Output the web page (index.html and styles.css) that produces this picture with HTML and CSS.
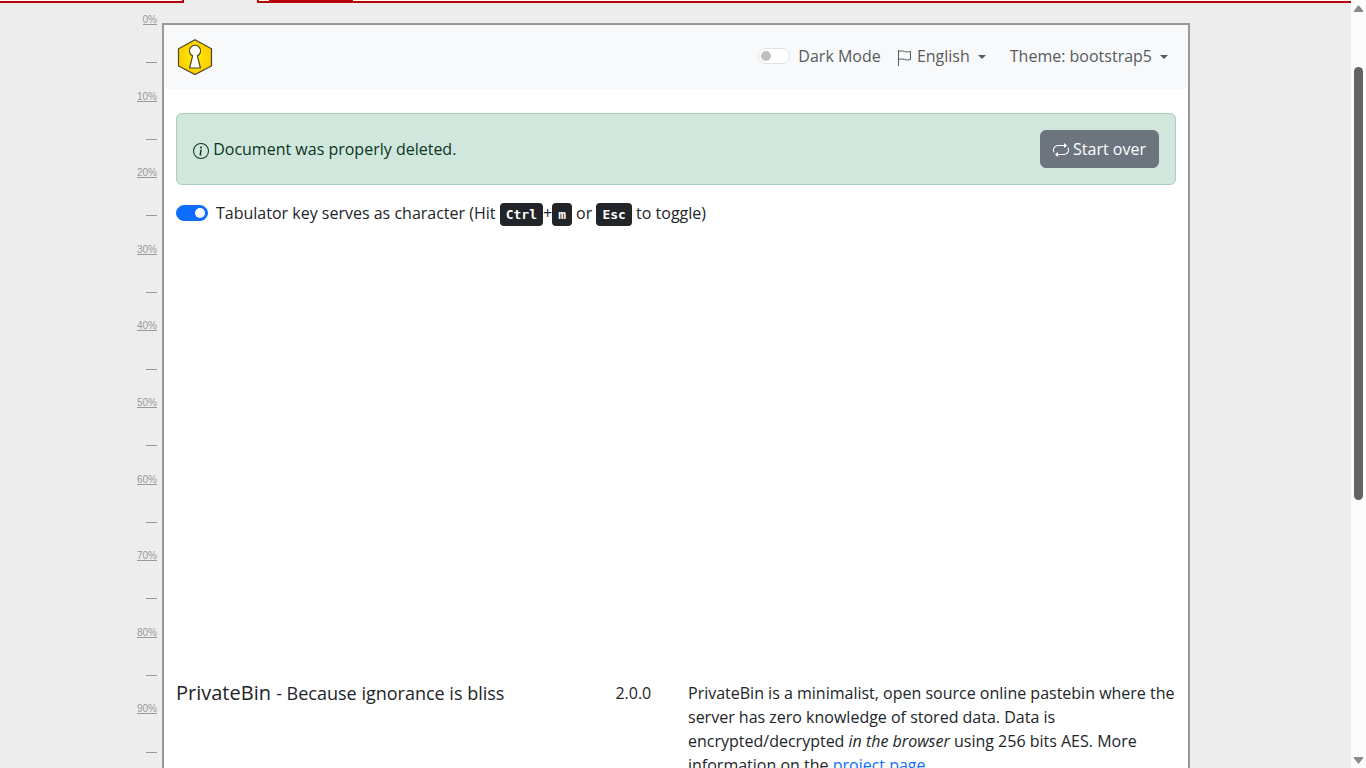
FILE: index.html
```html
<!DOCTYPE html>
<html lang="en">
<head>
    <meta charset="UTF-8">
    <meta name="viewport" content="width=device-width, initial-scale=1.0">
    <title>PrivateBin</title>
    <link rel="stylesheet" href="styles.css">
</head>
<body>

<div class="page">
    <div class="tabs">
        <div class="tab-left"></div>
        <div class="tab-right"><div class="tab-mark"></div></div>
    </div>

    <div class="report">
        <div class="scale">
            <span>0%</span><i></i>
            <span>10%</span><i></i>
            <span>20%</span><i></i>
            <span>30%</span><i></i>
            <span>40%</span><i></i>
            <span>50%</span><i></i>
            <span>60%</span><i></i>
            <span>70%</span><i></i>
            <span>80%</span><i></i>
            <span>90%</span><i></i>
        </div>

        <div class="frame">
            <nav class="navbar">
                <a class="brand" href="#" aria-label="PrivateBin">
                    <svg width="38" height="38" viewBox="0 0 38 38">
                        <defs>
                            <radialGradient id="gold">
                                <stop offset="0" stop-color="#fff000"/>
                                <stop offset="1" stop-color="#ffcc00"/>
                            </radialGradient>
                        </defs>
                        <path d="M19 1.8 35.5 10.8V28L19 36.6 2.5 28V10.8Z" fill="url(#gold)" stroke="#4a4726" stroke-width="1.2"/>
                        <path d="M16.6 17.9a5.6 5.6 0 1 1 4.8 0L24.4 30H13.6Z" fill="#fff" stroke="#4a4726" stroke-width="1.2"/>
                    </svg>
                </a>
                <div class="nav-items">
                    <div class="switch-row">
                        <input class="switch" type="checkbox" id="darkmode">
                        <label for="darkmode">Dark Mode</label>
                    </div>
                    <button class="nav-link" type="button">
                        <svg class="icon" width="16" height="16" viewBox="0 0 16 16" fill="none" stroke="currentColor">
                            <path d="M1.5 0v16M1.5 1.5c2 -1 4 -.6 6 0s4 .6 6 0v8c-2 .6-4 .6-6 0s-4-.8-6 0"/>
                        </svg>
                        English<span class="caret"></span>
                    </button>
                    <button class="nav-link" type="button">Theme: bootstrap5<span class="caret"></span></button>
                </div>
            </nav>

            <main>
                <div class="alert" role="alert">
                    <div>
                        <svg class="icon" width="16" height="16" viewBox="0 0 16 16" fill="currentColor">
                            <path d="M8 15A7 7 0 1 1 8 1a7 7 0 0 1 0 14m0 1A8 8 0 1 0 8 0a8 8 0 0 0 0 16"/>
                            <path d="m8.93 6.588-2.29.287-.082.38.45.083c.294.07.352.176.288.469l-.738 3.468c-.194.897.105 1.319.808 1.319.545 0 1.178-.252 1.465-.598l.088-.416c-.2.176-.492.246-.686.246-.275 0-.375-.193-.304-.533zM9 4.5a1 1 0 1 1-2 0 1 1 0 0 1 2 0"/>
                        </svg>
                        Document was properly deleted.
                    </div>
                    <button class="btn" type="button">
                        <svg class="icon" width="16" height="16" viewBox="0 0 16 16" fill="currentColor">
                            <path d="M11 5.466V4H5a4 4 0 0 0-3.584 5.777.5.5 0 1 1-.896.446A5 5 0 0 1 5 3h6V1.534a.25.25 0 0 1 .41-.192l2.36 1.966c.12.1.12.284 0 .384l-2.36 1.966a.25.25 0 0 1-.41-.192Zm3.81.086a.5.5 0 0 1 .67.225A5 5 0 0 1 11 13H5v1.466a.25.25 0 0 1-.41.192l-2.36-1.966a.25.25 0 0 1 0-.384l2.36-1.966a.25.25 0 0 1 .41.192V12h6a4 4 0 0 0 3.585-5.777.5.5 0 0 1 .225-.67Z"/>
                        </svg>
                        Start over
                    </button>
                </div>
                <div class="switch-row">
                    <input class="switch" type="checkbox" id="tabsupport" checked>
                    <label for="tabsupport">Tabulator key serves as character (Hit <kbd>Ctrl</kbd>+<kbd>m</kbd> or <kbd>Esc</kbd> to toggle)</label>
                </div>
            </main>

            <footer>
                <h4>PrivateBin <small>- Because ignorance is bliss</small></h4>
                <p class="version">2.0.0</p>
                <p>PrivateBin is a minimalist, open source online pastebin where the server has zero knowledge of stored data. Data is encrypted/decrypted <em>in the browser</em> using 256 bits AES. More information on the <a href="#">project page</a>.</p>
            </footer>
        </div>
    </div>
</div>

<div class="scrollbar">
    <svg width="9" height="7" viewBox="0 0 9 7"><path d="M4.5 0 9 5.5V7H0V5.500Z" fill="#8b8b8b"/></svg>
    <div class="track"><div class="thumb"></div></div>
    <svg width="9" height="7" viewBox="0 0 9 7"><path d="M4.500 7 9 1.500V0H0V1.500Z" fill="#8b8b8b"/></svg>
</div>

</body>
</html>
```

FILE: styles.css
```css
* {
    box-sizing: border-box;
}
body {
    margin: 0;
    height: 100vh;
    display: flex;
    overflow: hidden;
    background: #ededed;
    color: #212529;
    font-family: "Segoe UI", "Open Sans", "Noto Sans", sans-serif;
    font-size: 16px;
    line-height: 24px;
}
button {
    font: inherit;
    cursor: pointer;
}
a {
    color: #0d6efd;
}
.page {
    flex: 1;
    min-width: 0;
}
.tabs {
    display: flex;
    gap: 73px;
    height: 3px;
}
.tab-left, .tab-right {
    background: #fffff0;
    border-bottom: 2px solid #b8000f;
}
.tab-left {
    width: 184px;
    border-right: 2px solid #b8000f;
}
.tab-right {
    flex: 1;
    padding-left: 10px;
    border-left: 2px solid #b8000f;
}
.tab-mark {
    width: 84px;
    height: 1px;
    background: #b8000f;
}
.report {
    display: grid;
    grid-template-columns: 162px 1fr 161px;
    align-items: start;
}
.scale {
    display: grid;
    grid-template-rows: repeat(20, 1fr);
    justify-items: end;
    align-items: start;
    height: 766px;
    margin-top: 11px;
    padding-right: 5px;
    color: #999;
    font: 10px/12px "Liberation Sans", Arial, sans-serif;
}
.scale span, .scale i {
    height: 11px;
    border-bottom: 1px solid #999;
}
.scale i {
    width: 11px;
}
.frame {
    margin-top: 20px;
    border: 2px solid #999;
    background: #fff;
}
.navbar {
    display: flex;
    justify-content: space-between;
    align-items: center;
    height: 64px;
    padding: 0 12px;
    background: #f8f9fa;
}
.brand svg {
    display: block;
}
.nav-items {
    display: flex;
    align-items: center;
    gap: 8px;
    padding-bottom: 2px;
    color: #595a5b;
}
.nav-link {
    padding: 8px;
    border: 0;
    background: none;
    color: inherit;
}
.icon {
    vertical-align: -4px;
}
.btn .icon {
    vertical-align: -3px;
}
.caret {
    display: inline-block;
    margin-left: 8px;
    vertical-align: 3px;
    border: 4px solid transparent;
    border-top-color: currentColor;
    border-bottom: 0;
}
.switch-row {
    display: flex;
    align-items: center;
    gap: 8px;
}
.switch {
    appearance: none;
    flex: none;
    display: flex;
    align-items: center;
    width: 32px;
    height: 16px;
    margin: 0;
    padding: 0 2px;
    border: 1px solid #dee2e6;
    border-radius: 8px;
    background: #fff;
}
.switch::before {
    content: "";
    width: 10px;
    height: 10px;
    border-radius: 50%;
    background: #bfbfbf;
}
.switch:checked {
    justify-content: flex-end;
    border-color: #0d6efd;
    background: #0d6efd;
}
.switch:checked::before {
    background: #fff;
}
main {
    min-height: 592px;
    padding: 24px 12px 0;
}
.alert {
    display: flex;
    justify-content: space-between;
    align-items: center;
    margin-bottom: 16px;
    padding: 16px;
    border: 1px solid #a3cfbb;
    border-radius: 6px;
    background: #d1e7dd;
    color: #0a3622;
}
.btn {
    padding: 6px 12px;
    border: 1px solid #6c757d;
    border-radius: 6px;
    background: #6c757d;
    color: #fff;
}
kbd {
    padding: 4px 6px;
    border-radius: 4px;
    background: #212529;
    color: #fff;
    font: bold 13px "DejaVu Sans Mono", monospace;
}
footer {
    display: grid;
    grid-template-columns: 5fr 1fr 6fr;
}
footer h4, footer p {
    margin: 0;
    padding: 0 12px;
}
footer h4 {
    font-size: 20px;
    font-weight: 400;
}
footer small {
    font-size: 18px;
}
.version {
    text-align: center;
}
.scrollbar {
    display: flex;
    flex-direction: column;
    align-items: center;
    width: 15px;
    padding: 5px 0 4px;
    background: #fcfcfc;
}
.track {
    flex: 1;
    width: 9px;
    padding-top: 55px;
}
.thumb {
    height: 433px;
    border-radius: 5px;
    background: #636363;
}
```
